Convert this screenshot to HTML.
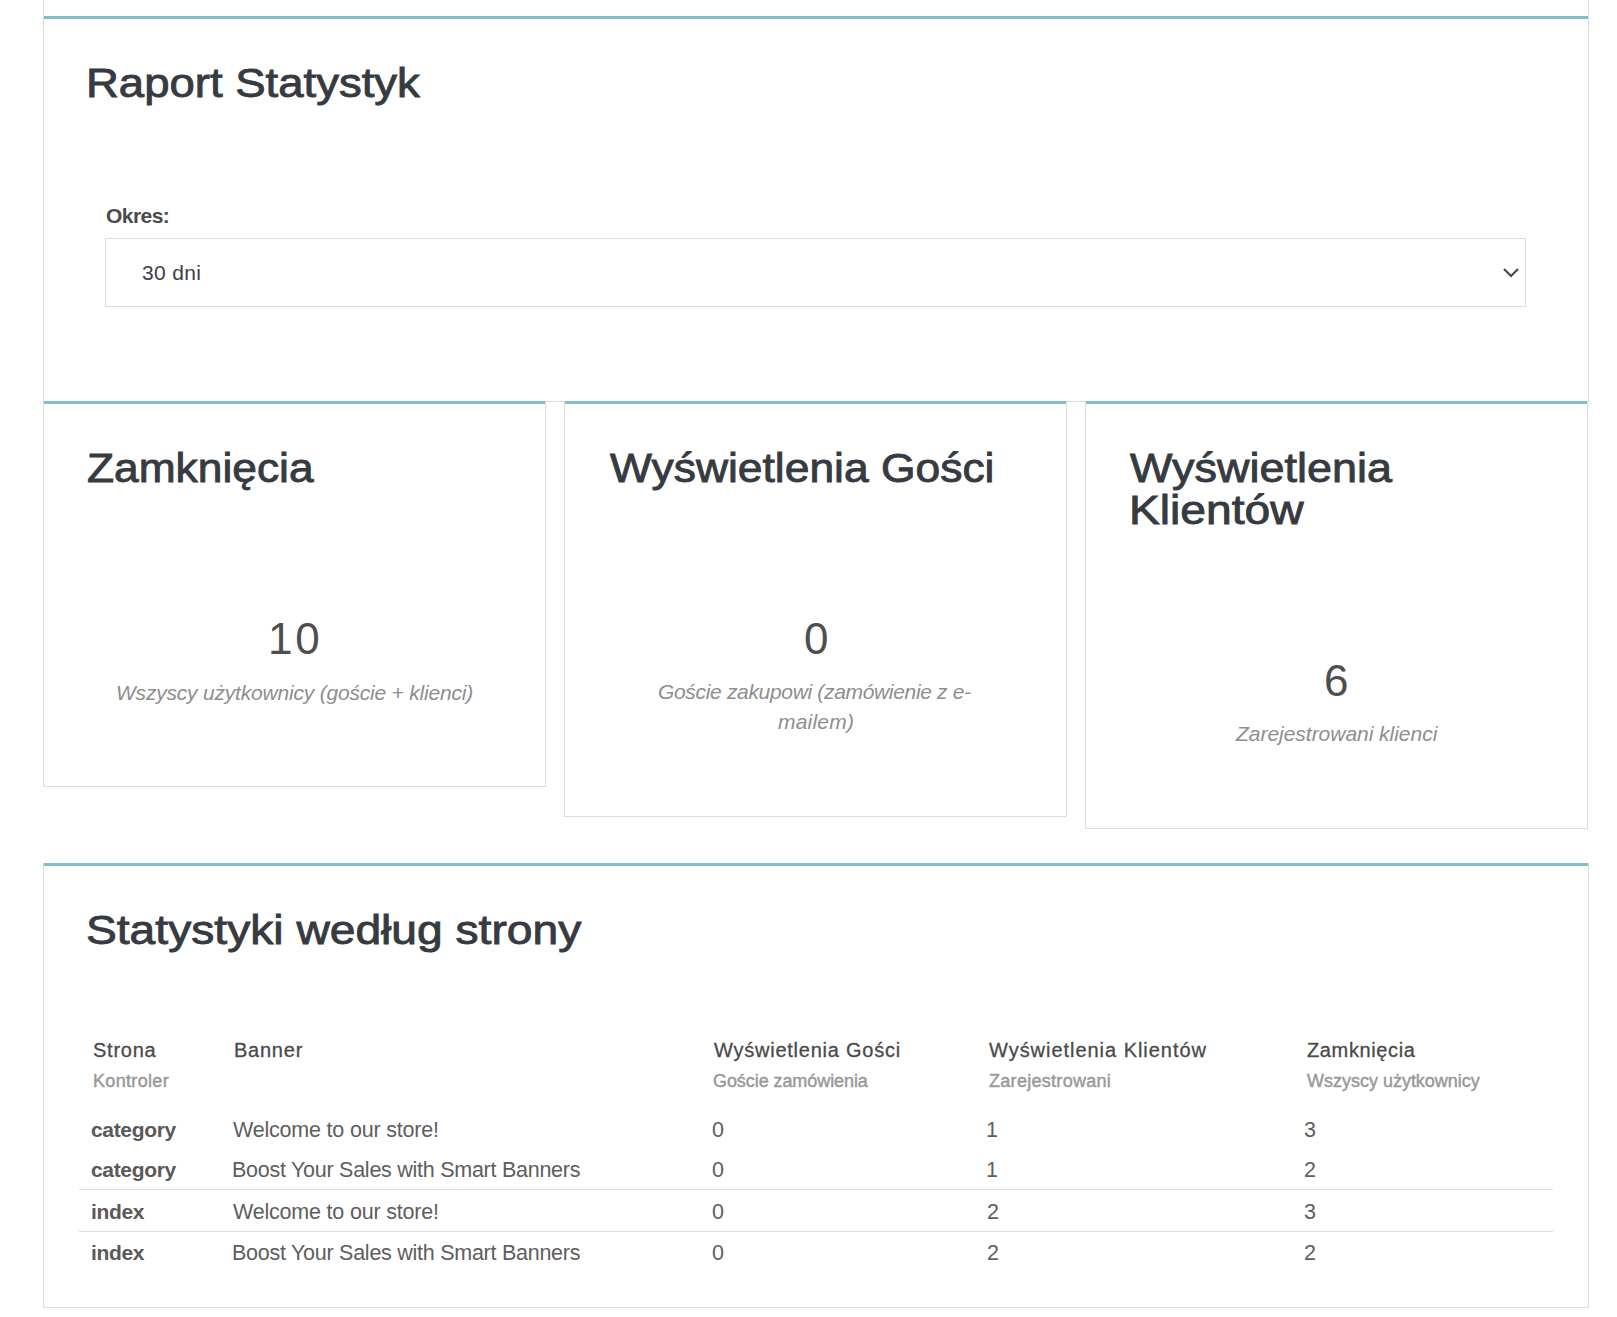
<!DOCTYPE html>
<html><head><meta charset="utf-8"><style>
html,body{margin:0;padding:0;background:#fff;width:1617px;height:1317px;overflow:hidden;position:relative}
body{font-family:"Liberation Sans", sans-serif}
.t{position:absolute;white-space:nowrap;line-height:1;font-family:"Liberation Sans", sans-serif}
.b{position:absolute;box-sizing:border-box}
</style></head><body>
<div class="b" style="left:43px;top:-20px;width:1546px;height:422px;border:1px solid #dcdcdc;border-top:0"></div>
<div class="b" style="left:44px;top:16px;width:1544px;height:3px;background:#7dbfcf"></div>
<div class="b" style="left:105px;top:238px;width:1421px;height:69px;border:1px solid #dcdcdc"></div>
<svg class="b" style="left:1500px;top:264px" width="22" height="16" viewBox="0 0 22 16"><path d="M4 5 L11 12 L18 5" fill="none" stroke="#4a4a4a" stroke-width="2.2"/></svg>
<div class="b" style="left:43px;top:401px;width:503px;height:386px;border:1px solid #dcdcdc;border-top:0;background:#fff"></div>
<div class="b" style="left:44px;top:401px;width:501px;height:3px;background:#7dbfcf"></div>
<div class="b" style="left:564px;top:401px;width:503px;height:416px;border:1px solid #dcdcdc;border-top:0;background:#fff"></div>
<div class="b" style="left:565px;top:401px;width:501px;height:3px;background:#7dbfcf"></div>
<div class="b" style="left:1085px;top:401px;width:503px;height:428px;border:1px solid #dcdcdc;border-top:0;background:#fff"></div>
<div class="b" style="left:1086px;top:401px;width:501px;height:3px;background:#7dbfcf"></div>
<div class="b" style="left:43px;top:863px;width:1546px;height:445px;border:1px solid #dcdcdc;border-top:0"></div>
<div class="b" style="left:44px;top:863px;width:1544px;height:3px;background:#7dbfcf"></div>
<div class="b" style="left:79px;top:1189px;width:1474px;height:1px;background:#dedede"></div>
<div class="b" style="left:79px;top:1231px;width:1474px;height:1px;background:#dedede"></div>
<div class="t" id="t1" style="left:86.00px;top:63.31px;font-size:41px;color:#363a41;-webkit-text-stroke:0.9px #363a41;transform:scaleX(1.1100);transform-origin:0 0">Raport Statystyk</div>
<div class="t" id="t2" style="left:87.00px;top:448.31px;font-size:41px;color:#363a41;-webkit-text-stroke:0.9px #363a41;transform:scaleX(1.0806);transform-origin:0 0">Zamknięcia</div>
<div class="t" id="t3" style="left:610.00px;top:448.31px;font-size:41px;color:#363a41;-webkit-text-stroke:0.9px #363a41;transform:scaleX(1.0828);transform-origin:0 0">Wyświetlenia Gości</div>
<div class="t" id="t4a" style="left:1130.00px;top:448.31px;font-size:41px;color:#363a41;-webkit-text-stroke:0.9px #363a41;transform:scaleX(1.0967);transform-origin:0 0">Wyświetlenia</div>
<div class="t" id="t4b" style="left:1129.00px;top:490.40px;font-size:41px;color:#363a41;-webkit-text-stroke:0.9px #363a41;transform:scaleX(1.1273);transform-origin:0 0">Klientów</div>
<div class="t" id="t5" style="left:86.00px;top:910.31px;font-size:41px;color:#363a41;-webkit-text-stroke:0.9px #363a41;transform:scaleX(1.1261);transform-origin:0 0">Statystyki według strony</div>
<div class="t" id="lbl" style="left:106.00px;top:204.60px;font-size:21px;font-weight:bold;color:#4b4b4b;letter-spacing:-0.540px">Okres:</div>
<div class="t" id="sel" style="left:142.00px;top:261.81px;font-size:21px;color:#3d4047;letter-spacing:0.340px">30 dni</div>
<div class="t" id="n1" style="left:268.00px;top:616.80px;font-size:44px;color:#4e4e4e;letter-spacing:2.700px">10</div>
<div class="t" id="n2" style="left:804.00px;top:616.71px;font-size:44px;color:#4e4e4e">0</div>
<div class="t" id="n3" style="left:1324.00px;top:659.30px;font-size:44px;color:#4e4e4e">6</div>
<div class="t" id="s1" style="left:116.00px;top:682.01px;font-size:21px;font-style:italic;color:#8e8e8e;letter-spacing:-0.203px">Wszyscy użytkownicy (goście + klienci)</div>
<div class="t" id="s2a" style="left:658.00px;top:681.10px;font-size:21px;font-style:italic;color:#8e8e8e;letter-spacing:-0.329px">Goście zakupowi (zamówienie z e-</div>
<div class="t" id="s2b" style="left:778.00px;top:711.40px;font-size:21px;font-style:italic;color:#8e8e8e;letter-spacing:0.217px">mailem)</div>
<div class="t" id="s3" style="left:1236.00px;top:723.31px;font-size:21px;font-style:italic;color:#8e8e8e;letter-spacing:-0.029px">Zarejestrowani klienci</div>
<div class="t" id="h1" style="left:93.00px;top:1039.70px;font-size:20px;color:#4a4a4a;letter-spacing:0.740px;-webkit-text-stroke:0.3px #4a4a4a">Strona</div>
<div class="t" id="h2" style="left:234.00px;top:1039.70px;font-size:20px;color:#4a4a4a;letter-spacing:0.760px;-webkit-text-stroke:0.3px #4a4a4a">Banner</div>
<div class="t" id="h3" style="left:714.00px;top:1039.70px;font-size:20px;color:#4a4a4a;letter-spacing:0.765px;-webkit-text-stroke:0.3px #4a4a4a">Wyświetlenia Gości</div>
<div class="t" id="h4" style="left:989.00px;top:1039.70px;font-size:20px;color:#4a4a4a;letter-spacing:0.965px;-webkit-text-stroke:0.3px #4a4a4a">Wyświetlenia Klientów</div>
<div class="t" id="h5" style="left:1307.00px;top:1039.70px;font-size:20px;color:#4a4a4a;letter-spacing:0.633px;-webkit-text-stroke:0.3px #4a4a4a">Zamknięcia</div>
<div class="t" id="k1" style="left:93.00px;top:1071.72px;font-size:18px;color:#999999;letter-spacing:0.325px;-webkit-text-stroke:0.45px #999999">Kontroler</div>
<div class="t" id="k3" style="left:713.00px;top:1071.72px;font-size:18px;color:#999999;letter-spacing:-0.075px;-webkit-text-stroke:0.45px #999999">Goście zamówienia</div>
<div class="t" id="k4" style="left:989.00px;top:1071.72px;font-size:18px;color:#999999;letter-spacing:0.292px;-webkit-text-stroke:0.45px #999999">Zarejestrowani</div>
<div class="t" id="k5" style="left:1307.00px;top:1071.72px;font-size:18px;color:#999999;letter-spacing:-0.011px;-webkit-text-stroke:0.45px #999999">Wszyscy użytkownicy</div>
<div class="t" id="r0a" style="left:91.00px;top:1118.70px;font-size:21px;font-weight:bold;color:#595959;letter-spacing:-0.329px">category</div>
<div class="t" id="r0b" style="left:233.00px;top:1119.71px;font-size:21.5px;color:#5e5e5e;letter-spacing:-0.200px">Welcome to our store!</div>
<div class="t" id="r0c" style="left:712.00px;top:1119.71px;font-size:21.5px;color:#5e5e5e">0</div>
<div class="t" id="r0d" style="left:986.00px;top:1119.71px;font-size:21.5px;color:#5e5e5e">1</div>
<div class="t" id="r0e" style="left:1304.00px;top:1119.71px;font-size:21.5px;color:#5e5e5e">3</div>
<div class="t" id="r1a" style="left:91.00px;top:1158.81px;font-size:21px;font-weight:bold;color:#595959;letter-spacing:-0.329px">category</div>
<div class="t" id="r1b" style="left:232.00px;top:1159.80px;font-size:21.5px;color:#5e5e5e;letter-spacing:-0.262px">Boost Your Sales with Smart Banners</div>
<div class="t" id="r1c" style="left:712.00px;top:1159.80px;font-size:21.5px;color:#5e5e5e">0</div>
<div class="t" id="r1d" style="left:986.00px;top:1159.80px;font-size:21.5px;color:#5e5e5e">1</div>
<div class="t" id="r1e" style="left:1304.00px;top:1159.80px;font-size:21.5px;color:#5e5e5e">2</div>
<div class="t" id="r2a" style="left:91.00px;top:1200.90px;font-size:21px;font-weight:bold;color:#595959;letter-spacing:-0.325px">index</div>
<div class="t" id="r2b" style="left:233.00px;top:1201.91px;font-size:21.5px;color:#5e5e5e;letter-spacing:-0.200px">Welcome to our store!</div>
<div class="t" id="r2c" style="left:712.00px;top:1201.91px;font-size:21.5px;color:#5e5e5e">0</div>
<div class="t" id="r2d" style="left:987.00px;top:1201.91px;font-size:21.5px;color:#5e5e5e">2</div>
<div class="t" id="r2e" style="left:1304.00px;top:1201.91px;font-size:21.5px;color:#5e5e5e">3</div>
<div class="t" id="r3a" style="left:91.00px;top:1241.60px;font-size:21px;font-weight:bold;color:#595959;letter-spacing:-0.325px">index</div>
<div class="t" id="r3b" style="left:232.00px;top:1242.60px;font-size:21.5px;color:#5e5e5e;letter-spacing:-0.262px">Boost Your Sales with Smart Banners</div>
<div class="t" id="r3c" style="left:712.00px;top:1242.60px;font-size:21.5px;color:#5e5e5e">0</div>
<div class="t" id="r3d" style="left:987.00px;top:1242.60px;font-size:21.5px;color:#5e5e5e">2</div>
<div class="t" id="r3e" style="left:1304.00px;top:1242.60px;font-size:21.5px;color:#5e5e5e">2</div>
</body></html>
